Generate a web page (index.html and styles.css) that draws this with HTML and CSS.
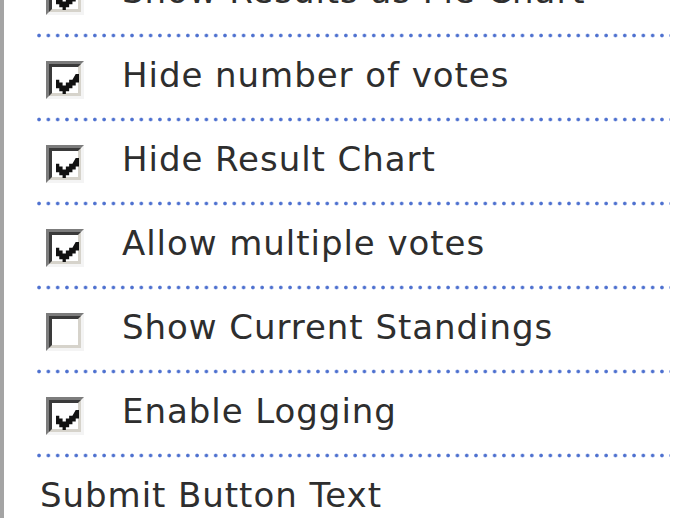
FILE: index.html
```html
<!DOCTYPE html>
<html lang="en">
<head>
  <meta charset="UTF-8" />
  <title>Poll Settings</title>
  <link rel="stylesheet" href="styles.css">
</head>
<body>
  <div class="panel">
    <ul class="options">
      <!-- partly scrolled out of view -->
      <li class="opt">
        <span class="box checked"><svg viewBox="0 0 7 7" preserveAspectRatio="none"><path d="M6 0h1v3h-1v1h-1v1h-1v1h-1v1h-1v-1h-1v-1h-1v-3h1v1h1v1h1v-1h1v-1h1z"/></svg></span>
        <span class="label">Show Results as Pie Chart</span>
      </li>
      <li class="opt">
        <span class="box checked"><svg viewBox="0 0 7 7" preserveAspectRatio="none"><path d="M6 0h1v3h-1v1h-1v1h-1v1h-1v1h-1v-1h-1v-1h-1v-3h1v1h1v1h1v-1h1v-1h1z"/></svg></span>
        <span class="label">Hide number of votes</span>
      </li>
      <li class="opt">
        <span class="box checked"><svg viewBox="0 0 7 7" preserveAspectRatio="none"><path d="M6 0h1v3h-1v1h-1v1h-1v1h-1v1h-1v-1h-1v-1h-1v-3h1v1h1v1h1v-1h1v-1h1z"/></svg></span>
        <span class="label">Hide Result Chart</span>
      </li>
      <li class="opt">
        <span class="box checked"><svg viewBox="0 0 7 7" preserveAspectRatio="none"><path d="M6 0h1v3h-1v1h-1v1h-1v1h-1v1h-1v-1h-1v-1h-1v-3h1v1h1v1h1v-1h1v-1h1z"/></svg></span>
        <span class="label">Allow multiple votes</span>
      </li>
      <li class="opt">
        <span class="box"></span>
        <span class="label">Show Current Standings</span>
      </li>
      <li class="opt">
        <span class="box checked"><svg viewBox="0 0 7 7" preserveAspectRatio="none"><path d="M6 0h1v3h-1v1h-1v1h-1v1h-1v1h-1v-1h-1v-1h-1v-3h1v1h1v1h1v-1h1v-1h1z"/></svg></span>
        <span class="label">Enable Logging</span>
      </li>
      <li class="opt last">
        <span class="label plain">Submit Button Text</span>
      </li>
    </ul>
  </div>
</body>
</html>
```

FILE: styles.css
```css
body {
  margin: 0;
  background: #fff;
  font-family: "DejaVu Sans", Verdana, sans-serif;
  color: #2e2e2e;
  overflow: hidden;
}
.panel {
  border-left: 4px solid #a4a4a4;
  min-height: 100vh;
  padding-left: 33px;
  box-sizing: border-box;
}
.options {
  list-style: none;
  margin: -46px 0 0 0;
  padding: 0;
  width: 633px;
}
.opt {
  display: flex;
  align-items: flex-start;
  height: 84px;
  box-sizing: border-box;
  background-image: radial-gradient(circle, #4d70cf 1.3px, rgba(77, 112, 207, 0) 2.3px);
  background-size: 9.31px 5px;
  background-position: -2.6px 100%;
  background-repeat: repeat-x;
}
.opt.last {
  background: none;
}
.box {
  flex: none;
  width: 38px;
  height: 38px;
  margin: 23px 0 0 9px;
  box-sizing: border-box;
  border: 3px solid;
  border-color: #7c7c7c #f4f4f4 #f4f4f4 #7c7c7c;
  position: relative;
  filter: blur(0.4px);
}
.box::before {
  content: "";
  position: absolute;
  inset: 0;
  border: 3px solid;
  border-color: #3a3a3a #d6d3cb #d6d3cb #3a3a3a;
}
.box svg {
  position: absolute;
  left: 7px;
  top: 10px;
  width: 23px;
  height: 20px;
  fill: #111;
}
.label {
  margin: 17px 0 0 38px;
  font-size: 34px;
  line-height: 40px;
  letter-spacing: 0.95px;
  white-space: nowrap;
}
.label.plain {
  margin-left: 3px;
}
```
